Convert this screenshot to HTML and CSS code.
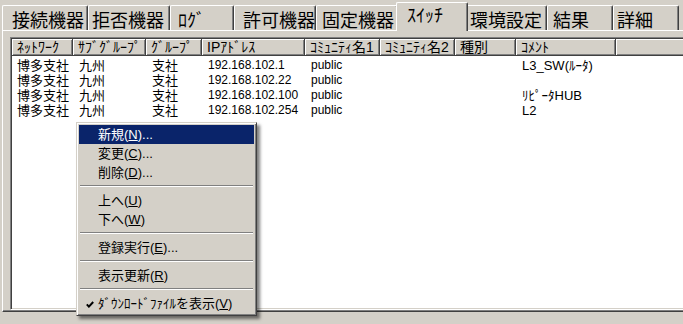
FILE: index.html
```html
<!DOCTYPE html>
<html lang="ja">
  <head>
    <meta charset="UTF-8" />
    <title>スイッチ</title>
    <link rel="stylesheet" href="styles.css">
  </head>
  <body>
    <div class="window">
      <div class="tabs">
        <div class="tab tab-1">接続機器</div>
        <div class="tab tab-2">拒否機器</div>
        <div class="tab tab-3">ﾛｸﾞ</div>
        <div class="tab tab-4">許可機器</div>
        <div class="tab tab-5">固定機器</div>
        <div class="tab tab-6 selected">ｽｲｯﾁ</div>
        <div class="tab tab-7">環境設定</div>
        <div class="tab tab-8">結果</div>
        <div class="tab tab-9">詳細</div>
      </div>

      <div class="panel">
        <div class="list">
          <div class="list-head">
            <div class="head-cell">ﾈｯﾄﾜｰｸ</div>
            <div class="head-cell">ｻﾌﾞｸﾞﾙｰﾌﾟ</div>
            <div class="head-cell">ｸﾞﾙｰﾌﾟ</div>
            <div class="head-cell">IPｱﾄﾞﾚｽ</div>
            <div class="head-cell">ｺﾐｭﾆﾃｨ名1</div>
            <div class="head-cell">ｺﾐｭﾆﾃｨ名2</div>
            <div class="head-cell">種別</div>
            <div class="head-cell">ｺﾒﾝﾄ</div>
            <div class="head-cell"></div>
          </div>

          <div class="list-body">
            <div class="row">
              <div class="cell">博多支社</div>
              <div class="cell">九州</div>
              <div class="cell">支社</div>
              <div class="cell small">192.168.102.1</div>
              <div class="cell small">public</div>
              <div class="cell"></div>
              <div class="cell"></div>
              <div class="cell">L3_SW(ﾙｰﾀ)</div>
              <div class="cell"></div>
            </div>
            <div class="row">
              <div class="cell">博多支社</div>
              <div class="cell">九州</div>
              <div class="cell">支社</div>
              <div class="cell small">192.168.102.22</div>
              <div class="cell small">public</div>
              <div class="cell"></div>
              <div class="cell"></div>
              <div class="cell"></div>
              <div class="cell"></div>
            </div>
            <div class="row">
              <div class="cell">博多支社</div>
              <div class="cell">九州</div>
              <div class="cell">支社</div>
              <div class="cell small">192.168.102.100</div>
              <div class="cell small">public</div>
              <div class="cell"></div>
              <div class="cell"></div>
              <div class="cell">ﾘﾋﾟｰﾀHUB</div>
              <div class="cell"></div>
            </div>
            <div class="row">
              <div class="cell">博多支社</div>
              <div class="cell">九州</div>
              <div class="cell">支社</div>
              <div class="cell small">192.168.102.254</div>
              <div class="cell small">public</div>
              <div class="cell"></div>
              <div class="cell"></div>
              <div class="cell">L2</div>
              <div class="cell"></div>
            </div>
          </div>
        </div>
      </div>
    </div>

    <!-- context menu -->
    <div class="menu">
      <div class="menu-item active">新規(<u>N</u>)...</div>
      <div class="menu-item">変更(<u>C</u>)...</div>
      <div class="menu-item">削除(<u>D</u>)...</div>
      <div class="menu-sep"></div>
      <div class="menu-item">上へ(<u>U</u>)</div>
      <div class="menu-item">下へ(<u>W</u>)</div>
      <div class="menu-sep"></div>
      <div class="menu-item">登録実行(<u>E</u>)...</div>
      <div class="menu-sep"></div>
      <div class="menu-item">表示更新(<u>R</u>)</div>
      <div class="menu-sep"></div>
      <div class="menu-item checked">
        <svg class="check" width="8" height="7" viewBox="0 0 8 7">
          <path d="M0.8 3.4 L2.9 5.6 L7.2 1" fill="none" stroke="#000" stroke-width="2" />
        </svg>ﾀﾞｳﾝﾛｰﾄﾞﾌｧｲﾙを表示(<u>V</u>)
      </div>
    </div>
  </body>
</html>
```

FILE: styles.css
```css
* {
  margin: 0;
  padding: 0;
  box-sizing: border-box;
}

body {
  background-color: #d4d0c8;
  font-family: "Liberation Sans", "Noto Sans CJK JP", sans-serif;
  font-size: 13px;
  color: #000;
  width: 683px;
  height: 324px;
  overflow: hidden;
  position: relative;
}

.window {
  width: 683px;
  padding-top: 2px;
}

/* Tabs */
.tabs {
  display: flex;
  align-items: flex-end;
  height: 28px;
  padding-left: 2px;
}

.tab {
  height: 25px;
  padding-top: 2px;
  font-family: "Noto Sans CJK JP", sans-serif;
  font-size: 18px;
  line-height: 22px;
  white-space: nowrap;
  border-top: 1px solid #fff;
  border-left: 1px solid #fff;
  border-right: 1px solid #404040;
  border-radius: 2px 2px 0 0;
  box-shadow: inset -1px 0 #808080;
}

.tab.selected {
  height: 29px;
  padding-top: 0;
  margin: 0 -2px -1px;
  background-color: #d4d0c8;
  position: relative;
  z-index: 1;
}

.tab-1 { width: 86px; padding-left: 9px; }
.tab-2 { width: 82px; padding-left: 3px; }
.tab-3 { width: 64px; padding-left: 7px; }
.tab-4 { width: 82px; padding-left: 8px; }
.tab-5 { width: 82px; padding-left: 5px; }
.tab-6 { width: 72px; padding-left: 10px; }
.tab-7 { width: 81px; padding-left: 3px; }
.tab-8 { width: 66px; padding-left: 5px; }
.tab-9 { width: 66px; padding-left: 3px; }

/* Panel + list view, right edge runs out of the window */
.panel {
  height: 282px;
  margin-left: 2px;
  margin-right: -20px;
  padding: 6px 0 1px 7px;
  border-top: 1px solid #fff;
  border-left: 1px solid #fff;
  border-bottom: 1px solid #404040;
  box-shadow: inset 0 -1px #808080;
}

.list {
  height: 273px;
  padding: 1px;
  background-color: #fff;
  border: 1px solid;
  border-color: #808080 #fff #fff #808080;
  box-shadow: inset 1px 1px #404040, inset -1px -1px #d4d0c8;
  overflow: hidden;
}

.list-head,
.row {
  display: grid;
  grid-template-columns: 61px 73px 56px 103px 75px 75px 61px 100px 1fr;
}

.list-head {
  height: 17px;
}

.head-cell {
  background-color: #d4d0c8;
  border-right: 1px solid #404040;
  border-bottom: 1px solid #404040;
  box-shadow: inset 1px 1px #fff, inset -1px -1px #808080;
  padding-left: 5px;
  font-size: 14px;
  line-height: 16px;
  white-space: nowrap;
  overflow: hidden;
}

.list-body {
  padding-top: 2px;
}

.row {
  height: 15px;
  line-height: 15px;
}

.cell {
  padding-left: 6px;
  white-space: nowrap;
  overflow: hidden;
}

.cell:first-child {
  padding-left: 5px;
}

.cell.small {
  font-size: 12px;
}

/* Context menu */
.menu {
  position: absolute;
  left: 76px;
  top: 122px;
  width: 181px;
  padding: 2px;
  background-color: #d4d0c8;
  border: 1px solid;
  border-color: #d4d0c8 #404040 #404040 #d4d0c8;
  box-shadow: inset 1px 1px #fff, inset -1px -1px #808080,
    3px 3px 3px rgba(0, 0, 0, 0.5);
  z-index: 5;
}

.menu-item {
  height: 19px;
  line-height: 19px;
  padding-left: 19px;
  white-space: nowrap;
}

.menu-item.active {
  background-color: #0a246a;
  color: #fff;
}

.menu-item u {
  text-underline-offset: 1px;
}

.menu-item .check {
  margin-left: -12px;
  margin-right: 4px;
}

.menu-sep {
  margin: 3px 1px 4px;
  border-top: 1px solid #808080;
  border-bottom: 1px solid #fff;
}
```
